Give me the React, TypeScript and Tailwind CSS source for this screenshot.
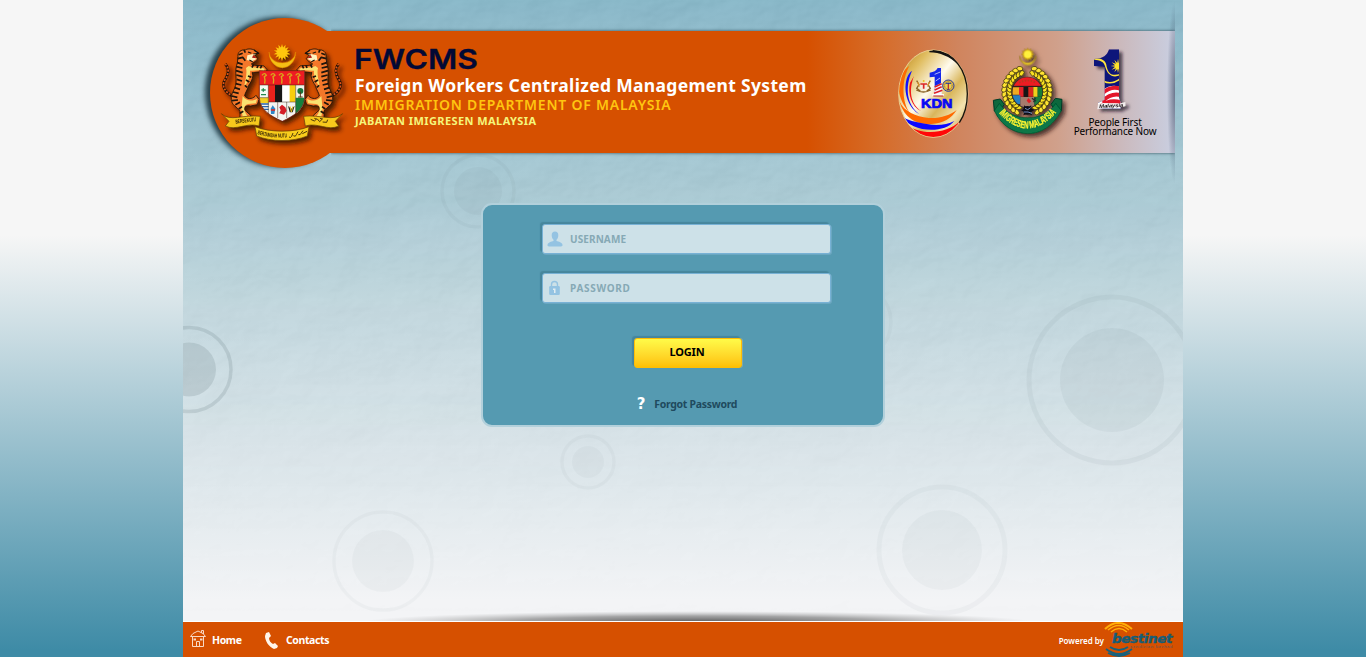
import React from "react";

const tiger = (
  <g strokeLinejoin="round">
    <path d="M70 200 C40 184 34 164 47 146 C58 130 56 112 46 102" fill="none" stroke="#1a1208" strokeWidth="8" />
    <path d="M70 200 C40 184 34 164 47 146 C58 130 56 112 46 102" fill="none" stroke="#e2541c" strokeWidth="5" strokeDasharray="6 4" />
    <path
      d="M84 80 C82 66 94 58 106 60 C116 54 126 58 134 60 L146 70 L134 75 L143 86 C140 94 130 96 124 102 C134 110 150 104 162 108 L172 120 L162 130 C148 122 138 128 126 128 C132 138 126 152 116 166 C112 182 104 190 104 198 C116 212 132 204 138 196 L147 208 L142 224 L122 228 C110 226 102 228 104 240 L122 256 L120 264 L90 264 L90 244 C82 230 64 226 64 208 C62 190 76 178 78 160 C80 140 74 122 80 106 C84 96 82 90 84 80Z"
      fill="#f3772a"
      stroke="#1b1208"
      strokeWidth="2.5"
    />
    <path d="M116 108 C130 116 148 110 164 116 L162 124 C146 117 134 124 120 122 C122 138 114 156 102 172 C106 152 112 130 108 114Z M98 198 C112 218 132 212 141 206 L138 220 L114 222 C100 226 98 238 112 258 L98 260 L94 236Z" fill="#fae170" />
    <path d="M112 76 L142 70 L129 78 L140 87 L126 94 L110 90Z" fill="#fff2c2" />
    <path d="M130 75 L140 85 L126 83Z" fill="#b01814" />
    <path d="M132 61 L146 70 L130 72 M114 66 L124 70 M118 90 L128 95" fill="none" stroke="#1b1208" strokeWidth="3.5" />
    <path
      d="M86 74 L98 70 M83 86 L98 82 L106 92 M82 98 L98 103 M79 110 L97 114 M78 122 L98 128 M79 135 L98 140 M80 148 L96 153 M77 161 L94 165 M74 173 L90 178 M69 186 L86 190 M65 198 L82 202 M66 212 L84 210 M76 224 L90 217 M86 237 L96 230 M90 250 L100 244 M102 60 L106 68 M130 104 L126 113 M144 106 L141 114 M155 107 L151 115 M124 142 L114 138 M118 156 L108 150 M112 172 L104 166"
      fill="none"
      stroke="#1b1208"
      strokeWidth="5"
    />
  </g>
);

function rays(cx: number, cy: number, n: number, r1: number, r2: number) {
  return Array.from({ length: n * 2 }, (_, i) => {
    const a = (i * Math.PI) / n - Math.PI / 2;
    const r = i % 2 ? r1 : r2;
    return `${(cx + r * Math.cos(a)).toFixed(1)},${(cy + r * Math.sin(a)).toFixed(1)}`;
  }).join(" ");
}

function Crest() {
  return (
    <svg width="150" height="125" viewBox="0 0 450 375" className="shrink-0 overflow-visible">
      <defs>
        <filter id="crestShadow" x="-10%" y="-10%" width="125%" height="130%">
          <feDropShadow dx="9" dy="10" stdDeviation="7" floodColor="#2a0d00" floodOpacity="0.8" />
        </filter>
        <clipPath id="shield">
          <path d="M148 122 H284 V204 C282 240 250 258 217 274 C182 258 150 240 148 204Z" />
        </clipPath>
      </defs>
      <g filter="url(#crestShadow)">
        <path d="M177 66 A39 46 0 0 0 257 66 A40 33 0 0 1 177 66Z" fill="#f5be12" stroke="#e6a000" />
        <polygon points={rays(216, 67, 14, 15, 25)} fill="#ffc60a" />
        {tiger}
        <g transform="translate(432 0) scale(-1 1)">{tiger}</g>
        <g clipPath="url(#shield)">
          <rect x="148" y="122" width="136" height="152" fill="#f4f4f0" />
          <rect x="148" y="122" width="136" height="43" fill="#ee1c22" />
          <rect x="148" y="165" width="27" height="38" fill="#f5faf5" />
          <rect x="175" y="165" width="20" height="51" fill="#e8201f" />
          <rect x="195" y="165" width="22" height="51" fill="#161413" />
          <rect x="217" y="165" width="22" height="51" fill="#fff" />
          <rect x="239" y="165" width="18" height="51" fill="#f8ce10" />
          <rect x="148" y="203" width="28" height="16" fill="#f3ce23" />
          <path d="M257 165 H284 V250 H257Z" fill="#f1f4e8" />
          <path d="M257 203 H284 V255 H257Z" fill="#16803e" />
          <path d="M148 222 H176 M148 230 H176 M152 238 H176" stroke="#2763ac" strokeWidth="4" />
          <path d="M175 165 V252 M257 165 V252 M148 203 H175 M175 216 H257 M203 216 V264 M230 216 V264 M148 165 H284" stroke="#3c2a18" strokeWidth="1.5" />
        </g>
        <path d="M148 122 H284 V204 C282 240 250 258 217 274 C182 258 150 240 148 204Z" fill="none" stroke="#6b120c" strokeWidth="2" />
        {[164, 190, 215, 240, 265].map((x) => (
          <path key={x} d={`M${x - 8} 136 Q${x} 126 ${x + 5} 136 L${x - 1} 140 L${x + 1} 150 L${x} 161`} fill="none" stroke="#d9a91d" strokeWidth="4" />
        ))}
        <circle cx="271" cy="183" r="9" fill="#19753a" />
        <path d="M271 185 V202 M264 201 H278" stroke="#563217" strokeWidth="3" />
        <path d="M154 180 H167 M160 175 V185 M153 194 H168" stroke="#26884d" strokeWidth="4" />
        <path d="M182 236 L188 226 L196 236 L193 252 H183Z" fill="#2f87c8" />
        <path d="M183 240 H195" stroke="#d52b2b" strokeWidth="5" />
        <path d="M208 232 L216 224 L226 232 L230 242 L222 254 L208 250 L212 241Z" fill="#d41d27" />
        <path d="M234 228 L244 236 L254 228 L248 247 L239 247Z" fill="#222" />
        <path d="M240 229 L244 246 L249 229" fill="none" stroke="#eac323" strokeWidth="3" />
        <path d="M34 251 C60 276 98 253 151 259 L147 288 C110 276 78 304 46 288 L57 274Z" fill="#f7c91b" stroke="#5f3d08" strokeWidth="2" />
        <path d="M398 251 C370 276 332 253 281 259 L286 288 C322 276 354 304 386 288 L376 274Z" fill="#f7c91b" stroke="#5f3d08" strokeWidth="2" />
        <path d="M135 290 C180 308 252 308 297 290 L292 318 C248 336 184 336 140 318Z" fill="#f9cd1b" stroke="#5f3d08" strokeWidth="2" />
        <path id="motto" d="M142 312 C170 322 203 324 232 322" fill="none" />
        <text className="font-['Liberation_Sans']" fontSize="17" fontWeight="700" fill="#2b1b05">
          <textPath href="#motto" textLength="90" lengthAdjust="spacingAndGlyphs">BERTAMBAH MUTU</textPath>
        </text>
        <text x="77" y="281" fontSize="17" fontWeight="700" textLength="62" lengthAdjust="spacingAndGlyphs" transform="rotate(-7 77 281)" className="font-['Liberation_Sans']" fill="#2b1b05">BERSEKUTU</text>
        <path d="M237 321 q5 4 8 -2 l4 -10 M250 317 q7 5 9 -3 l5 -9 M265 314 q7 1 8 -4 l6 -8 M277 311 l14 -7 M302 268 l11 5 l8 -7 l8 9 l8 -8 M338 276 l12 1 l3 -8 M313 265 l5 2 M330 265 l8 2" stroke="#2b1b05" strokeWidth="2.5" fill="none" />
      </g>
    </svg>
  );
}

function KdnLogo() {
  return (
    <svg width="100" height="110" viewBox="0 0 300 330" className="shrink-0">
      <defs>
        <linearGradient id="gold" x1="0" y1="0" x2="1" y2="1">
          <stop offset="0" stopColor="#b57d10" />
          <stop offset=".22" stopColor="#e0bd60" />
          <stop offset=".45" stopColor="#fffbed" />
          <stop offset=".62" stopColor="#d9b65b" />
          <stop offset=".78" stopColor="#f3e3b0" />
          <stop offset="1" stopColor="#b27c1a" />
        </linearGradient>
        <clipPath id="kdnClip"><ellipse cx="130" cy="161" rx="103" ry="130" /></clipPath>
      </defs>
      <ellipse cx="130" cy="161" rx="104" ry="131" fill="url(#gold)" stroke="#e9cf92" strokeWidth="3" />
      <path d="M128 32 C190 34 232 90 232 161 C232 196 224 224 208 248" fill="none" stroke="#17120c" strokeWidth="4" />
      <path d="M118 33 C160 28 192 52 206 76 C178 48 150 38 118 37Z" fill="#111" />
      <g clipPath="url(#kdnClip)">
        <path d="M58 78 C34 120 34 190 62 222 C42 200 16 160 30 118 C36 98 46 86 58 78Z" fill="#ff6a00" />
        <path d="M66 92 C44 142 50 194 88 222 C58 206 38 160 50 116 C54 104 60 96 66 92Z" fill="#1010ff" />
        <path d="M72 108 C56 150 60 190 94 214 C64 200 52 160 60 128Z" fill="#f01818" />
        <path d="M28 184 C44 240 86 254 124 252 C160 250 184 236 200 210 C180 226 150 236 116 234 C76 230 44 216 28 184Z" fill="#ff6a00" />
        <path d="M34 228 C62 276 160 284 193 243 C172 254 140 258 110 252 C74 246 54 242 34 228Z" fill="#0c08ff" />
        <path d="M44 250 C84 286 166 286 210 244 C186 294 140 300 112 294 C80 288 60 270 44 250Z" fill="#ff0808" />
      </g>
      <path d="M119 98 Q137 96 143 84 H153 V160 H134 V110 L119 112Z" fill="#1526e9" />
      <path d="M134 139 L155 128 V165 H133Z" fill="#f4f4ff" />
      <path d="M134 141 L155 131 M134 150 L155 140 M132 160 L157 151" stroke="#df2028" strokeWidth="5" />
      <path d="M127 165 H162" stroke="#fff" strokeWidth="5" /><path d="M130 168 H160" stroke="#b8202b" strokeWidth="3" />
      <path d="M134 103 L151 96 M137 123 L150 114" stroke="#fff" strokeWidth="2" />
      <g fill="none" stroke="#8a6428" strokeWidth="4">
        <path d="M80 122 L87 134 L80 145 L91 153 M121 122 L114 134 L121 145 L110 153 M79 150 Q100 162 122 150" />
        <path d="M83 126 L88 140 M118 126 L113 140" stroke="#e99a28" strokeWidth="3" />
      </g>
      <path d="M91 130 H111 V143 L101 151 L91 144Z" fill="#f5ecdf" /><path d="M91 132 H111 M101 132 V146" stroke="#dc2723" strokeWidth="5" />
      <circle cx="101" cy="123" r="3" fill="#edbe22" />
      <circle cx="175" cy="137" r="17" fill="#e6b72e" stroke="#2738a7" strokeWidth="3" />
      <circle cx="175" cy="137" r="11" fill="#f3cf4c" stroke="#385399" strokeWidth="2" strokeDasharray="3 2" />
      <path d="M167 130 H183 M175 129 V148 M171 149 H179" stroke="#28379b" strokeWidth="3" />
      <path d="M175 133 V148" stroke="#d12f20" strokeWidth="3" />
      <text x="93" y="205" fontSize="37" fontWeight="700" textLength="94" lengthAdjust="spacingAndGlyphs" fill="#0808f4" stroke="#0808f4" strokeWidth="2" className="font-['Liberation_Sans']">KDN</text>
    </svg>
  );
}

function ImmigrationLogo() {
  const leaves = Array.from({ length: 13 }, (_, i) => {
    const a = ((112 + i * 11.3) * Math.PI) / 180;
    return [126 + 60 * Math.cos(a), 153 + 62 * Math.sin(a), (a * 180) / Math.PI + 90];
  });
  const wreath = leaves.map(([x, y, r], i) => (
    <g key={i} transform={`translate(${x} ${y}) rotate(${r})`}>
      <ellipse cx="0" cy="-10" rx="9" ry="6.5" fill="#ffe332" stroke="#302b08" strokeWidth="2" transform="rotate(30)" />
      <ellipse cx="1" cy="8" rx="9" ry="6" fill="#f8df21" stroke="#302b08" strokeWidth="2" transform="rotate(-30)" />
    </g>
  ));
  return (
    <svg width="90" height="100" viewBox="0 0 270 300" className="shrink-0 overflow-visible">
      <defs>
        <filter id="badgeShadow" x="-15%" y="-10%" width="140%" height="130%">
          <feDropShadow dx="9" dy="9" stdDeviation="6" floodColor="#211816" floodOpacity="0.75" />
        </filter>
        <clipPath id="seal"><circle cx="127" cy="157" r="45" /></clipPath>
      </defs>
      <g filter="url(#badgeShadow)">
        <path d="M104 48 A24 27 0 0 0 152 48 A24 21 0 0 1 104 48Z" fill="#ffdf2c" stroke="#927417" strokeWidth="2" />
        <polygon points={rays(128, 43, 12, 13, 19)} fill="#e3b816" stroke="#7d6010" />
        <circle cx="128" cy="43" r="11" fill="#fff03c" />
        {wreath}
        <g transform="translate(252 0) scale(-1 1)">{wreath}</g>
        <circle cx="127" cy="157" r="47" fill="#332b25" />
        <g clipPath="url(#seal)">
          <path d="M78 108 H175 V139 H78Z" fill="#ed1c24" />
          <path d="M82 142 H103 V164 H82Z" fill="#efaa22" />
          <path d="M102 141 H116 V170 H102Z" fill="#e2202a" />
          <path d="M116 141 H130 V170 H116Z" fill="#161412" />
          <path d="M130 141 H145 V170 H130Z" fill="#d9261f" />
          <path d="M145 141 H158 V170 H145Z" fill="#f1d01a" />
          <path d="M158 141 H175 V170 H158Z" fill="#167c35" />
          <path d="M82 166 H106 V192 H82Z" fill="#287fc0" />
          <path d="M106 171 H148 V202 H106Z" fill="#a67b6d" />
          <path d="M148 171 H175 V194 H148Z" fill="#1c7c3d" />
          <path d="M125 182 L130 174 L139 184 L132 190Z" fill="#e41d24" />
          <path d="M141 175 L153 184 M151 173 L146 187" stroke="#20302f" strokeWidth="4" />
        </g>
        <path d="M102 128 Q127 115 153 128" fill="none" stroke="#b9371f" strokeWidth="6" strokeDasharray="5 4" />
        <path d="M82 139 H172" stroke="#271e1b" strokeWidth="3" />
        <g fill="#0a0d18">
          <circle cx="127" cy="211" r="13" />
          <path d="M117 196 L127 203 L139 196 L137 205 L149 210 L138 216 L141 226 L128 221 L115 226 L118 216 L108 211 L118 207Z" />
        </g>
        <path d="M120 205 L128 209 L137 203 M116 216 L129 216 L141 220" fill="none" stroke="#7590c2" strokeWidth="3" />
        <path d="M25 181 L46 177 L58 193 L43 217 L28 213Z M231 178 L211 175 L198 193 L214 217 L229 213Z" fill="#09683e" stroke="#043a25" strokeWidth="3" />
        <path d="M43 190 C63 220 101 235 127 233 C158 234 195 220 212 190 L229 212 C203 260 167 281 128 281 C87 280 49 258 28 212Z" fill="#087747" stroke="#034b2b" strokeWidth="2" />
        <path id="badgeArc" d="M42 219 Q82 265 128 265 Q177 264 222 208" fill="none" />
        <text fontSize="30" fontWeight="700" fill="#fff430" stroke="#fff430" className="font-['Liberation_Sans']"><textPath href="#badgeArc" textLength="202" lengthAdjust="spacingAndGlyphs">IMIGRESEN MALAYSIA</textPath></text>
      </g>
    </svg>
  );
}

function OneMalaysia() {
  return (
    <svg width="46" height="68" viewBox="0 0 138 204" className="overflow-visible">
      <defs>
        <filter id="oneShadow" x="-20%" y="-10%" width="160%" height="125%">
          <feDropShadow dx="10" dy="8" stdDeviation="5" floodColor="#1c1521" floodOpacity="0.7" />
        </filter>
        <clipPath id="one"><path d="M26 49 C54 49 66 37 71 20 H101 V166 L106 180 V198 H38 V181 L58 171 V72 L26 70Z" /></clipPath>
      </defs>
      <g filter="url(#oneShadow)" transform="translate(1 -1)">
        <g clipPath="url(#one)">
          <rect x="20" y="10" width="90" height="195" fill="#10127a" />
          <path d="M24 44 C48 48 62 50 64 72 C70 96 82 100 104 94 L104 98 C80 108 66 94 60 74 C56 54 42 54 24 50Z M54 113 Q78 126 104 106 L104 112 Q78 130 54 118Z" fill="#ffe63d" />
          <polygon points={rays(98, 70, 12, 9, 22)} fill="#ffe329" />
          <path d="M51 143 Q80 121 108 135 V203 H36 V143Z" fill="#fff" />
          <path d="M51 152 Q80 126 108 140 M50 176 Q80 148 108 158 M44 192 Q72 168 108 179" fill="none" stroke="#e3132c" strokeWidth="12" />
        </g>
        <path d="M38 185 C62 174 90 190 120 178 L120 190 C98 198 69 190 36 200Z" fill="#f2eded" />
        <text x="42" y="196" fontSize="15" fontWeight="700" fontStyle="italic" textLength="72" lengthAdjust="spacingAndGlyphs" transform="rotate(-3 42 196)" className="font-['Liberation_Sans']" fill="#171116">Malaysia</text>
      </g>
    </svg>
  );
}

const rings = [
  { x: 295, y: 191, o: 36, i: 24, opacity: 0.06 },
  { x: 6, y: 369.5, o: 42, i: 27, opacity: 0.18 },
  { x: 405, y: 462, o: 26, i: 16, opacity: 0.045 },
  { x: 200, y: 561, o: 49, i: 31, opacity: 0.04 },
  { x: 759, y: 550, o: 63, i: 40, opacity: 0.045 },
  { x: 929, y: 380, o: 83, i: 52, opacity: 0.065 },
  { x: 670, y: 322, o: 38, i: 25, opacity: 0.045 },
];

function Backdrop() {
  return (
    <svg className="absolute inset-0 -z-10" width="1000" height="622" viewBox="0 0 1000 622">
      <defs>
        <filter id="paper" x="0" y="0" width="100%" height="100%" colorInterpolationFilters="sRGB">
          <feTurbulence type="fractalNoise" baseFrequency="0.018 0.025" numOctaves="4" seed="8" />
          <feDiffuseLighting surfaceScale="5" lightingColor="#ffffff" diffuseConstant="0.95">
            <feDistantLight azimuth="225" elevation="50" />
          </feDiffuseLighting>
        </filter>
        <linearGradient id="fadeGrad" x1="0" y1="0" x2="0" y2="1">
          <stop offset="0" stopColor="#fff" /><stop offset=".6" stopColor="#aaa" /><stop offset="1" stopColor="#000" />
        </linearGradient>
        <mask id="fade"><rect width="1000" height="622" fill="url(#fadeGrad)" /></mask>
        <radialGradient id="footShadow">
          <stop offset="0" stopColor="#333" stopOpacity=".8" /><stop offset=".55" stopColor="#555" stopOpacity=".5" /><stop offset="1" stopColor="#888" stopOpacity="0" />
        </radialGradient>
      </defs>
      <g mask="url(#fade)"><rect width="1000" height="622" filter="url(#paper)" opacity=".07" /></g>
      {rings.map((c) => (
        <g key={c.x} fill="#5e7379" stroke="#5e7379" opacity={c.opacity}>
          <circle cx={c.x} cy={c.y} r={c.o} fill="none" strokeWidth={c.o > 60 ? 5 : 3.5} />
          <circle cx={c.x} cy={c.y} r={c.i} stroke="none" />
        </g>
      ))}
      <ellipse cx="515" cy="622" rx="335" ry="11" fill="url(#footShadow)" />
    </svg>
  );
}

function Header() {
  return (
    <header className="flex h-[187px] pl-[27px]">
      <div className="relative z-10 mt-[18px] -mr-[75px] h-[150px] w-[150px] shrink-0 rounded-full bg-[#d65000] shadow-[-5px_-1px_5px_rgba(20,45,55,0.85)]" />
      <div className="relative z-20 mt-[31px] flex h-[122px] w-[890px] bg-[linear-gradient(90deg,#d65000_0,#d65000_522px,#d66b27_592px,#d0845d_672px,#d0a08b_772px,#cbb9bc_835px,#c9cee0_888px)] before:absolute before:inset-y-0 before:right-0 before:left-[46px] before:-z-10 before:shadow-[0_0_3px_rgba(20,50,60,0.8)] before:[clip-path:inset(-6px_0_-6px_0)]">
        <div className="-mt-px -ml-[75px] w-[145px] shrink-0"><Crest /></div>
        <div className="flex w-[540px] shrink-0 flex-col pt-[16px] whitespace-nowrap">
          <svg width="124" height="22" className="overflow-visible">
            <text x="-1" y="22" fontSize="27" textLength="124" lengthAdjust="spacingAndGlyphs" fill="#020935" stroke="#020935" strokeWidth=".3" className="font-['Inter'] font-semibold">FWCMS</text>
          </svg>
          <h1 className="mt-[5px] text-[17.5px] leading-[22px] font-bold tracking-[0.32px] text-white">Foreign Workers Centralized Management System</h1>
          <h2 className="text-[14px] leading-[17px] font-semibold tracking-[0.77px] text-[#ffc510]">IMMIGRATION DEPARTMENT OF MALAYSIA</h2>
          <h3 className="text-[11px] leading-[15px] font-bold tracking-[0.42px] text-[#f5f77c]">JABATAN IMIGRESEN MALAYSIA</h3>
        </div>
        <div className="mt-[9px] -ml-[5px] w-[95px] shrink-0"><KdnLogo /></div>
        <div className="mt-[9px] w-[90px] shrink-0"><ImmigrationLogo /></div>
        <div className="-ml-[2px] flex w-[84px] shrink-0 flex-col items-center pt-[12px] text-[10px] leading-[9px] tracking-[-0.15px] whitespace-nowrap text-black">
          <div className="-ml-[14px] h-[75px]"><OneMalaysia /></div>
          <span>People First</span>
          <span>Performance Now</span>
        </div>
      </div>
      <div className="relative z-30 -ml-[8px] h-[184px] w-[8px] shrink-0 bg-[radial-gradient(ellipse_8px_92px_at_right,rgba(45,60,85,0.6),transparent)]" />
    </header>
  );
}

function Field({ label, children }: { label: string; children: React.ReactNode }) {
  const secret = label === "PASSWORD";
  return (
    <label className="flex h-[30px] w-[289px] items-center rounded-[3px] border border-[#77b1d5] bg-[#cde1e8] pl-[4px] shadow-[-2px_-2px_1px_rgba(48,104,126,0.4),1px_1px_0_rgba(130,180,210,0.5)]">
      {children}
      <input placeholder={label} type={secret ? "password" : "text"} className={`ml-[7px] w-[240px] bg-transparent text-[10px] font-bold text-[#477381] outline-none placeholder:text-[#86a9b5] ${secret ? "tracking-[0.7px]" : "tracking-[0.1px]"}`} />
    </label>
  );
}

export default function App() {
  return (
    <div className="h-[657px] overflow-hidden bg-[linear-gradient(180deg,#f6f6f6_0,#f6f6f6_235px,#3e8ba6_650px)] font-['Noto_Sans',sans-serif]">
      <div className="relative isolate mx-auto flex h-full w-[1000px] flex-col overflow-hidden bg-[linear-gradient(180deg,#86b8ca_0,#a8cad5_185px,#c3d9e0_310px,#d9e5ea_440px,#f3f4f6_600px)]">
        <Backdrop />
        <Header />
        <main className="flex flex-1 flex-col items-center pt-[16px]">
          <form className="flex h-[224px] w-[404px] flex-col items-center rounded-[11px] border-2 border-[#b2d0db] bg-[#559ab1] pt-[19px] pl-[7px]">
            <Field label="USERNAME">
              <svg width="16" height="16" viewBox="0 0 16 16" fill="#94c3e2"><path d="M4.7 4.2C4.7 1.7 5.9.5 8 .5s3.3 1.2 3.3 3.7c0 2-.8 3.7-1.8 4.5v1.4c2.2.8 5.5 1.2 6 3.7.2 1-.5 1.7-1.5 1.7H2C1 15.5.3 14.8.5 13.8 1 11.3 4.3 10.9 6.5 10.1V8.7C5.5 7.9 4.7 6.2 4.7 4.2Z" /></svg>
            </Field>
            <div className="h-[19px] shrink-0" />
            <Field label="PASSWORD">
              <svg width="16" height="16" viewBox="0 0 16 16"><path d="M4.5 7V4.5a3 3 0 0 1 6 0V7" fill="none" stroke="#94c3e2" strokeWidth="1.4" /><rect x="2.2" y="6" width="10.6" height="9" rx="1.2" fill="#94c3e2" /><path d="M6 8.5h2.500v4.500H7V10H6Z" fill="#e1edf2" /></svg>
            </Field>
            <button type="button" className="mt-[35px] ml-[3px] h-[30px] w-[108px] shrink-0 rounded-[3px] border border-[#ffbd05] bg-linear-to-b from-[#fffb48] to-[#ffc000] pr-[2px] pb-[2px] text-[11px] leading-[26px] font-bold tracking-[-0.2px] text-black shadow-[-2px_-2px_1px_rgba(48,104,126,0.4),1px_0_0_rgba(150,180,170,0.6)]">LOGIN</button>
            <a className="mt-[27px] ml-px flex h-[18px] items-center gap-[9px] text-[10.5px] leading-[18px] font-bold tracking-[-0.3px] whitespace-nowrap text-[#204a5e]">
              <span className="font-['DejaVu_Sans'] text-[15px]/[16px] text-white">?</span>Forgot Password
            </a>
          </form>
        </main>
        <footer className="flex h-[36px] shrink-0 items-center border-t border-white bg-[#d65000] pl-[7px] text-[10.5px] font-bold tracking-[-0.4px] text-white">
          <svg width="16" height="18" viewBox="0 0 16 18" className="-mt-[2px]" fill="none" stroke="#f8d9c5" strokeWidth="1"><path d="M.5 6.5H15.5L13 3.5 8 1 3 3.5Z M2.5 7V16.5H13.5V7 M6.5 16V11.5H9.5V16 M11.5 3V.5H13.5V4" /><rect x="4" y="9" width="1.5" height="1" fill="#fff" /><rect x="10.5" y="9" width="1.5" height="1" fill="#fff" /></svg>
          <span className="ml-[6px] w-[53px] pt-[2px]">Home</span>
          <svg width="14" height="18" viewBox="0 0 14 18" fill="#fff4e9"><path d="M1 2 4 1 6 5 4 7C4 10 6 12 8 13L10 12 13 15 12 17 9 18C4 16 0 10 0 5Z" /></svg>
          <span className="ml-[7px] pt-[2px]">Contacts</span>
          <span className="ml-auto pt-[2px] text-[8px] font-semibold tracking-normal">Powered by</span>
          <svg width="79" height="35" viewBox="0 0 79 35" className="shrink-0">
            <g fill="none" strokeWidth="1.5" stroke="#ffae08"><path d="M1 7Q14-5 28 7" strokeWidth="2" /><path d="M4 8Q15-1 25 8M7 10Q15 3 23 10" /></g>
            <g fill="none" strokeWidth="1.8" stroke="#17627d"><path d="M2 27Q15 37 28 27M6 25Q15 31 24 25M4 31Q15 37 26 31" /></g>
            <text x="8" y="21" fontSize="12" fontWeight="700" fontStyle="italic" textLength="60" lengthAdjust="spacingAndGlyphs" fill="#155d77" stroke="#155d77" strokeWidth=".4" className="font-['DejaVu_Sans']">bestinet</text>
            <text x="26" y="26" fontSize="4" textLength="42" fill="#7d5440" className="font-['Liberation_Sans']">sendirian berhad</text>
          </svg>
        </footer>
      </div>
    </div>
  );
}
